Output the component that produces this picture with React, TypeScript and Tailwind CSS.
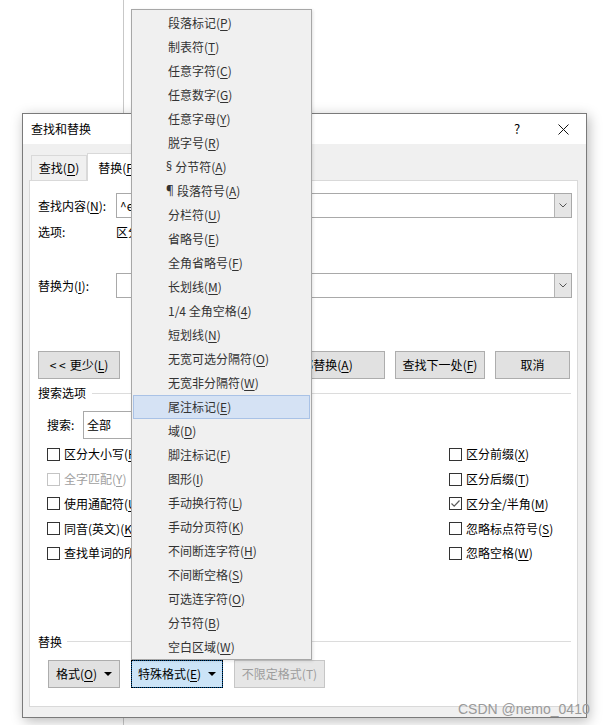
import React from "react";

const cjk = "font-['Noto_Sans_CJK_SC','Noto_Sans',sans-serif]";

type Item = { text: string; k: string };

const menuItems: Item[] = [
  { text: "段落标记", k: "P" },
  { text: "制表符", k: "T" },
  { text: "任意字符", k: "C" },
  { text: "任意数字", k: "G" },
  { text: "任意字母", k: "Y" },
  { text: "脱字号", k: "R" },
  { text: "§ 分节符", k: "A" },
  { text: "¶ 段落符号", k: "A" },
  { text: "分栏符", k: "U" },
  { text: "省略号", k: "E" },
  { text: "全角省略号", k: "F" },
  { text: "长划线", k: "M" },
  { text: "1/4 全角空格", k: "4" },
  { text: "短划线", k: "N" },
  { text: "无宽可选分隔符", k: "O" },
  { text: "无宽非分隔符", k: "W" },
  { text: "尾注标记", k: "E" },
  { text: "域", k: "D" },
  { text: "脚注标记", k: "F" },
  { text: "图形", k: "I" },
  { text: "手动换行符", k: "L" },
  { text: "手动分页符", k: "K" },
  { text: "不间断连字符", k: "H" },
  { text: "不间断空格", k: "S" },
  { text: "可选连字符", k: "O" },
  { text: "分节符", k: "B" },
  { text: "空白区域", k: "W" }
];

function Key({ text, k }: Item) {
  // § and ¶ come out full-width in the CJK face, so give them a latin one
  const symbol = text.startsWith("§ ") || text.startsWith("¶ ");
  return (
    <>
      {symbol ? (
        <>
          <span className="-ml-[2px] font-['Noto_Sans',sans-serif]">{text[0]}</span>
          <span className="ml-[3px]">{text.slice(2)}</span>
        </>
      ) : (
        text
      )}
      (<u className="underline-offset-2">{k}</u>)
    </>
  );
}

function Chevron() {
  return (
    <svg width="8" height="5" viewBox="0 0 8 5" fill="none">
      <path d="M0.5 0.5 L4 4 L7.5 0.5" stroke="#555" strokeWidth="1" />
    </svg>
  );
}

function Caret() {
  return (
    <svg width="8" height="4" viewBox="0 0 8 4">
      <path d="M0 0 H8 L4 4 Z" fill="#000" />
    </svg>
  );
}

function ComboInput({ value }: { value?: string }) {
  return (
    <div className="flex h-[25px] flex-1 border border-[#a9a9a9] bg-white">
      <div className="flex flex-1 items-center pl-[3px]">{value}</div>
      <div className="flex w-[17px] items-center justify-center border-l border-[#b4b4b4] bg-[#e5e5e5]">
        <Chevron />
      </div>
    </div>
  );
}

function Button({ children, className = "" }: { children: React.ReactNode; className?: string }) {
  return (
    <div className={`flex h-[28px] items-center justify-center border border-[#adadad] bg-[#e1e1e1] ${className}`}>
      {children}
    </div>
  );
}

function CheckRow({ item, checked, disabled }: { item: Item; checked?: boolean; disabled?: boolean }) {
  return (
    <div className={`flex h-[24.75px] items-center whitespace-nowrap ${disabled ? "text-[#a0a0a0]" : ""}`}>
      <div
        className={`flex h-[13px] w-[13px] shrink-0 items-center justify-center border bg-white ${
          disabled ? "border-[#c4c4c4]" : "border-[#333]"
        }`}
      >
        {checked ? (
          <svg width="11" height="11" viewBox="0 0 11 11" fill="none">
            <path d="M1.5 5.5 L4.2 8.2 L9.5 2.5" stroke="#5a5a5a" strokeWidth="1.2" />
          </svg>
        ) : null}
      </div>
      <span className="ml-[4px]">
        <Key {...item} />
      </span>
    </div>
  );
}

function GroupTitle({ title, gap }: { title: string; gap: string }) {
  return (
    <div className={`flex h-[16px] items-center pl-[8px] pr-[6px] ${gap}`}>
      <span>{title}</span>
      <div className="h-px flex-1 bg-[#dcdcdc]" />
    </div>
  );
}

function SpecialMenu() {
  return (
    <div className="absolute left-[131px] top-[9px] z-20 h-[651px] w-[181px] border border-[#a7a7a7] bg-[#f0f0f0] pt-px text-[#333] shadow-[1px_1px_3px_rgba(0,0,0,0.12)]">
      {menuItems.map((item, i) =>
        i === 16 ? (
          <div key={i} className="mx-px flex h-[24px] items-center border border-[#a9c2e6] bg-[#d5e2f4] pl-[34px]">
            <Key {...item} />
          </div>
        ) : (
          <div key={i} className="flex h-[24px] items-center pl-[36px]">
            <Key {...item} />
          </div>
        )
      )}
    </div>
  );
}

export default function App() {
  return (
    <div className={`relative flex h-[725px] w-[608px] overflow-hidden bg-white text-[12px] leading-[16px] text-black ${cjk}`}>
      <div className="h-full w-[124px] border-r border-[#c8c8c8]" />

      {/* dialog window */}
      <div className="absolute left-[22px] top-[113px] z-10 flex h-[605px] w-[565px] flex-col border border-[#7a7a7a] bg-[#f0f0f0] shadow-[2px_3px_12px_rgba(0,0,0,0.28)]">
        <div className="flex h-[30px] items-center bg-white pl-[8px]">
          <span className="flex-1">查找和替换</span>
          <div className="flex h-full w-[46px] items-center justify-center text-[13px]">?</div>
          <div className="flex h-full w-[46px] items-center justify-center">
            <svg width="11" height="11" viewBox="0 0 11 11" fill="none">
              <path d="M0.5 0.5 L10.5 10.5 M10.5 0.5 L0.5 10.5" stroke="#111" strokeWidth="1" />
            </svg>
          </div>
        </div>

        <div className="flex flex-1 flex-col pb-[10px] pl-[6px] pr-[8px] pt-[9px]">
          <div className="flex h-[27px] items-end pl-[2px]">
            <div className="flex h-[25px] w-[56px] items-center justify-center border border-b-0 border-[#d9d9d9] bg-[#f0f0f0]">
              <Key text="查找" k="D" />
            </div>
            <div className="relative z-10 -mb-px flex h-[28px] w-[62px] items-center justify-center border border-b-0 border-[#d9d9d9] bg-white">
              <Key text="替换" k="P" />
            </div>
          </div>

          <div className="flex flex-1 flex-col border border-[#d9d9d9] bg-white">
            <div className="mt-[12px] flex items-center pl-[8px] pr-[5px]">
              <span className="w-[78px]">
                <Key text="查找内容" k="N" />:
              </span>
              <ComboInput value="^e" />
            </div>
            <div className="mt-[6px] flex h-[16px] items-center pl-[8px]">
              <span className="w-[78px]">选项:</span>
              <span>区分全/半角</span>
            </div>
            <div className="mt-[33px] flex items-center pl-[8px] pr-[5px]">
              <span className="w-[78px]">
                <Key text="替换为" k="I" />:
              </span>
              <ComboInput />
            </div>

            <div className="mt-[53px] flex gap-[10px] pl-[8px] pr-[6px]">
              <Button className="mr-px w-[82px]">
                {"< <"}
                <span className="ml-[4px]">
                  <Key text="更少" k="L" />
                </span>
              </Button>
              <Button className="w-[116px]">
                <Key text="替换" k="R" />
              </Button>
              <Button className="w-[128px]">
                <Key text="全部替换" k="A" />
              </Button>
              <Button className="w-[90px]">
                <Key text="查找下一处" k="F" />
              </Button>
              <Button className="w-[75px]">取消</Button>
            </div>

            <GroupTitle title="搜索选项" gap="mt-[6px] gap-[6px]" />

            <div className="mt-[10px] flex items-center pl-[17px]">
              <span className="w-[36px]">搜索:</span>
              <div className="flex h-[28px] w-[112px] items-center border border-[#a9a9a9] pl-[3px]">全部</div>
            </div>

            <div className="mt-[3px] flex pl-[17px]">
              <div className="w-[402px]">
                <CheckRow item={{ text: "区分大小写", k: "H" }} />
                <CheckRow item={{ text: "全字匹配", k: "Y" }} disabled />
                <CheckRow item={{ text: "使用通配符", k: "U" }} />
                <CheckRow item={{ text: "同音(英文)", k: "K" }} />
                <CheckRow item={{ text: "查找单词的所有形式(英文)", k: "W" }} />
              </div>
              <div>
                <CheckRow item={{ text: "区分前缀", k: "X" }} />
                <CheckRow item={{ text: "区分后缀", k: "T" }} />
                <CheckRow item={{ text: "区分全/半角", k: "M" }} checked />
                <CheckRow item={{ text: "忽略标点符号", k: "S" }} />
                <CheckRow item={{ text: "忽略空格", k: "W" }} />
              </div>
            </div>

            <GroupTitle title="替换" gap="mt-[68px] gap-[5px]" />

            <div className="mt-[10px] flex gap-[11px] pl-[18px]">
              <Button className="w-[72px] gap-[7px]">
                <span>
                  <Key text="格式" k="O" />
                </span>
                <Caret />
              </Button>
              <div className="flex h-[28px] w-[92px] items-center justify-center gap-[7px] border border-[#005499] bg-[#cce4f7] outline-1 -outline-offset-1 outline-dotted outline-black">
                <span>
                  <Key text="特殊格式" k="E" />
                </span>
                <Caret />
              </div>
              <div className="flex h-[28px] w-[91px] items-center justify-center border border-[#c6c6c6] bg-[#e6e6e6] text-[#9d9d9d]">
                不限定格式(T)
              </div>
            </div>
          </div>
        </div>
      </div>

      <SpecialMenu />

      <div className="absolute left-[458px] top-[700px] z-30 font-['Liberation_Sans',Arial,sans-serif] text-[14px] leading-[18px] text-[#9a9a9a]">
        CSDN @nemo_0410
      </div>
    </div>
  );
}
